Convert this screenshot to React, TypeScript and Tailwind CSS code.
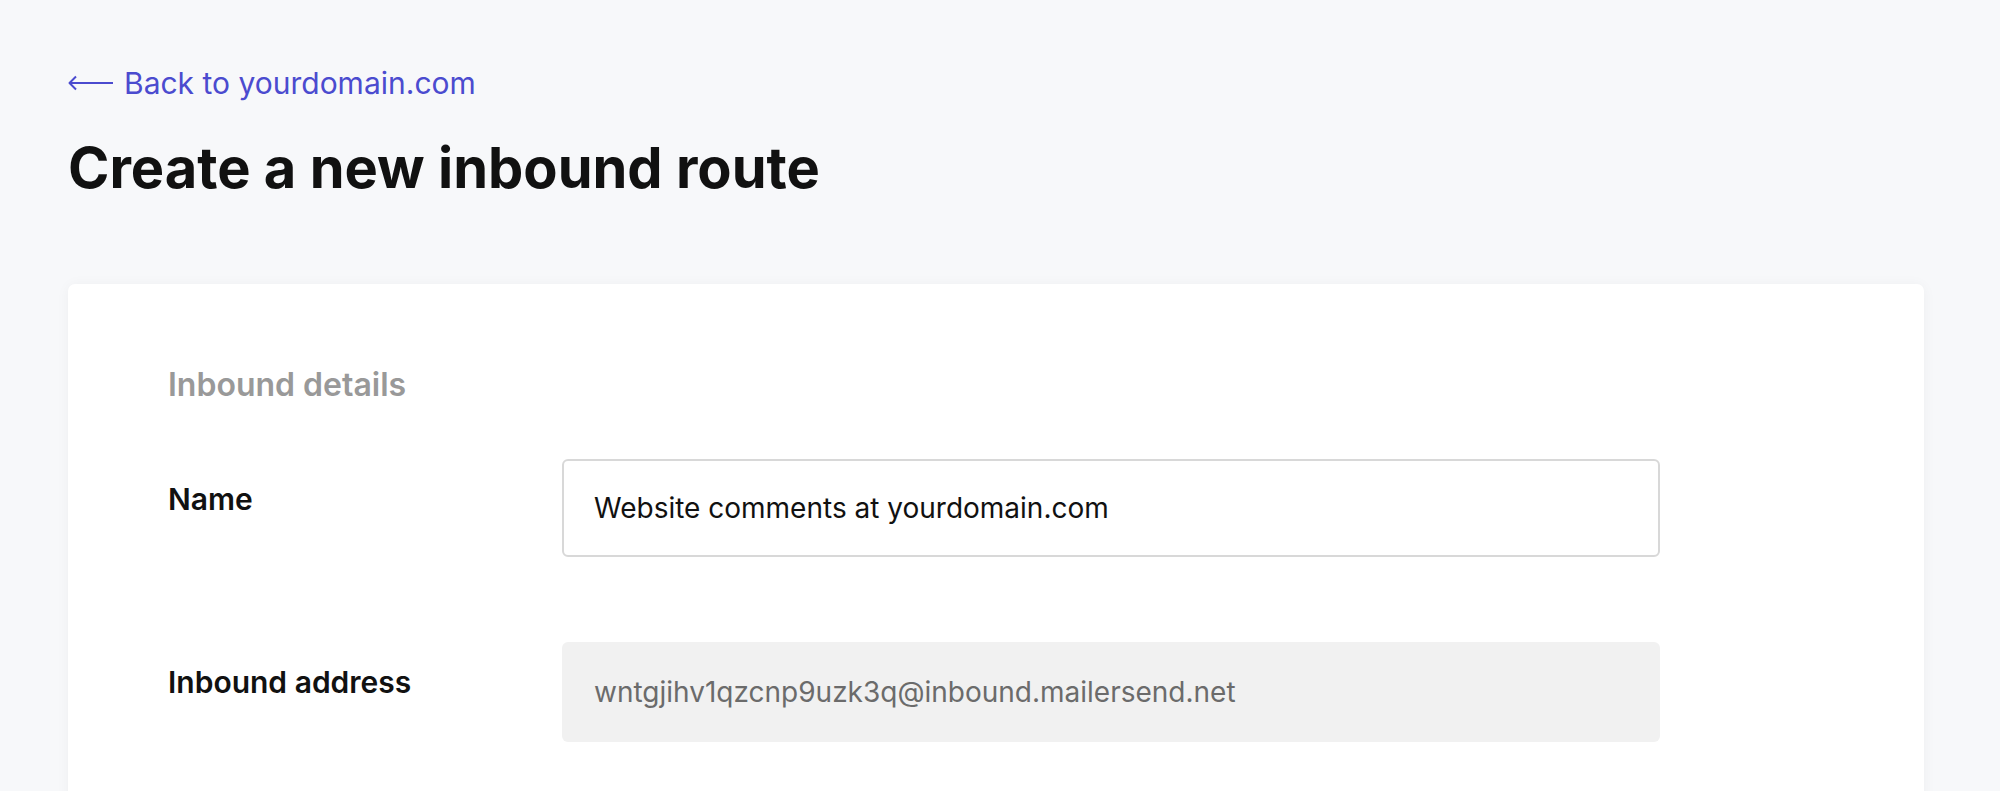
import React from 'react';

const BackArrow = () => (
  <svg width="46" height="16" viewBox="0 0 46 16" fill="none" className="shrink-0">
    <path d="M1.5 8 H45" stroke="currentColor" strokeWidth="2" />
    <path d="M8 1.5 L1.5 8 L8 14.5" stroke="currentColor" strokeWidth="2" strokeLinejoin="round" />
  </svg>
);

interface FieldRowProps {
  label: string;
  children: React.ReactNode;
  className?: string;
}

const FieldRow = ({ label, children, className = "" }: FieldRowProps) => (
  <div className={`flex ${className}`}>
    <div className="w-[394px] shrink-0 pt-[22px] text-[30px] leading-[36px] font-semibold text-[#111111]">
      {label}
    </div>
    <div className="w-[1098px]">{children}</div>
  </div>
);

export default function App() {
  return (
    <div
      className="h-[791px] overflow-hidden bg-[#f7f8fa] pl-[68px]"
      style={{ fontFamily: 'Inter, "Noto Sans", sans-serif' }}
    >
      {/* Header */}
      <a href="#" className="flex items-center gap-[10px] pt-[65px] text-[30px] leading-[36px] text-[#4b4bcf]">
        <BackArrow />
        <span>Back to yourdomain.com</span>
      </a>
      <h1 className="mt-[33px] text-[56px] leading-[68px] font-bold text-[#111111]">
        Create a new inbound route
      </h1>

      {/* Card */}
      <div className="mt-[82px] w-[1856px] min-h-[600px] rounded-[7px] bg-white pl-[100px] pt-[82px] shadow-[0_1px_14px_rgba(0,0,0,0.045)]">
        <h2 className="text-[32px] leading-[38px] font-semibold text-[#999999]">Inbound details</h2>

        <FieldRow label="Name" className="mt-[55px]">
          <div className="flex h-[98px] items-center rounded-[6px] border-2 border-[#d8d8d8] bg-white px-[30px] text-[28px] leading-[34px] text-[#111111]">
            Website comments at yourdomain.com
          </div>
        </FieldRow>

        <FieldRow label="Inbound address" className="mt-[85px]">
          <div className="flex h-[100px] items-center rounded-[6px] bg-[#f1f1f1] px-[32px] text-[28px] leading-[34px] text-[#6b6b6b]">
            wntgjihv1qzcnp9uzk3q@inbound.mailersend.net
          </div>
        </FieldRow>
      </div>
    </div>
  );
}
